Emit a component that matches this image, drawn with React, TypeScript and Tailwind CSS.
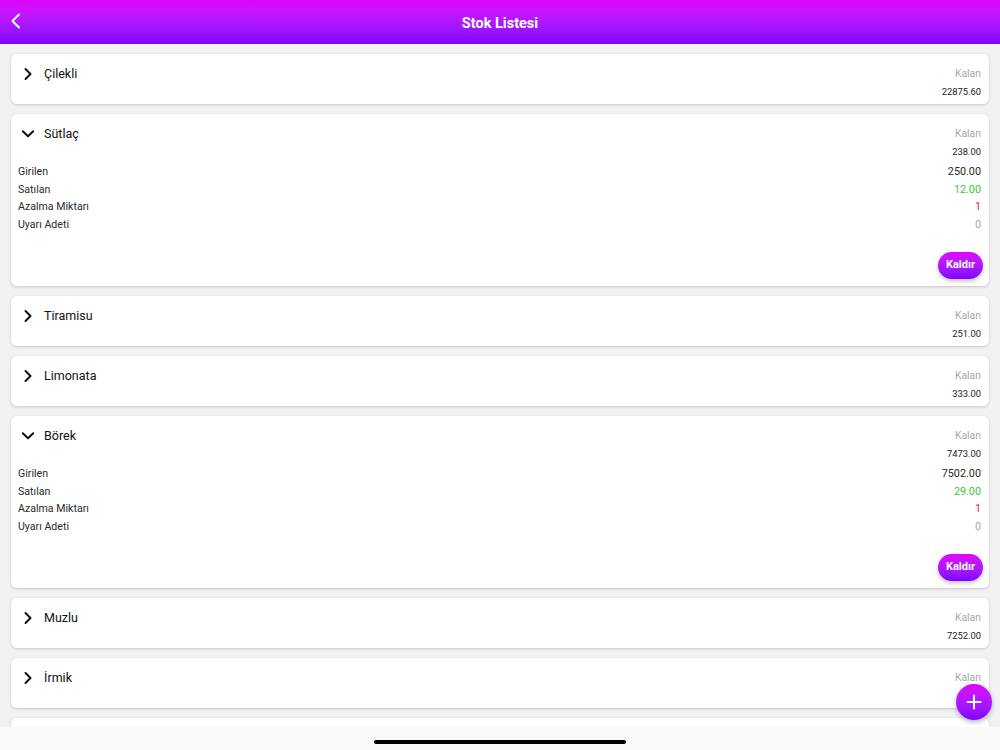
import { useState } from 'react';

// Stok Listesi — accordion list of stock items

interface StockItem {
  id:       number;
  name:     string;
  remain:   string;
  entered?: string;
  sold?:    string;
  drop?:    string;
  warn?:    string;
  open:     boolean;
}

const ITEMS: StockItem[] = [
  { id: 1, name: 'Çilekli',  remain: '22875.60', open: false },
  { id: 2, name: 'Sütlaç',   remain: '238.00', entered: '250.00', sold: '12.00', drop: '1', warn: '0', open: true },
  { id: 3, name: 'Tiramisu', remain: '251.00', open: false },
  { id: 4, name: 'Limonata', remain: '333.00', open: false },
  { id: 5, name: 'Börek',    remain: '7473.00', entered: '7502.00', sold: '29.00', drop: '1', warn: '0', open: true },
  { id: 6, name: 'Muzlu',    remain: '7252.00', open: false },
  { id: 7, name: 'İrmik',    remain: '8.00', open: false },
  { id: 8, name: 'Kakaolu',  remain: '84.00', open: false },
];

function Chevron({ open }: { open: boolean }) {
  return open ? (
    <svg width="14" height="14" viewBox="0 0 14 14" className="shrink-0">
      <path d="M1.8 4.3 L7 9.3 L12.2 4.3" fill="none" stroke="#111" strokeWidth="2" strokeLinecap="round" strokeLinejoin="round" />
    </svg>
  ) : (
    <svg width="14" height="14" viewBox="0 0 14 14" className="shrink-0">
      <path d="M4.5 2 L9.5 7 L4.5 12" fill="none" stroke="#111" strokeWidth="2" strokeLinecap="round" strokeLinejoin="round" />
    </svg>
  );
}

function Row({ label, value, color }: { label: string; value: string; color: string }) {
  return (
    <div className="flex items-center justify-between h-[17.5px]">
      <span className="text-[10.6px] text-[#2a2a2a]">{label}</span>
      <span className={`text-[10.8px] ${color}`}>{value}</span>
    </div>
  );
}

function StockCard({ item }: { item: StockItem }) {
  const [open, setOpen] = useState(item.open);
  return (
    <div className="bg-white rounded-[6px] shadow-[0_1px_3px_rgba(0,0,0,0.18)] px-[7px] pt-[13px] pb-[5px] shrink-0">
      <div className="flex justify-between cursor-pointer" onClick={() => setOpen(!open)}>
        <div className="flex items-center gap-[9px] h-[14px] pl-[3px]">
          <Chevron open={open} />
          <span className="text-[12.5px] text-[#111]">{item.name}</span>
        </div>
        <div className="flex flex-col items-end pr-[1px]">
          <span className="text-[10.4px] leading-[14px] text-[#a8a8a8]">Kalan</span>
          <span className="text-[9.4px] leading-[14px] mt-[4px] text-[#222]">{item.remain}</span>
        </div>
      </div>
      {open && (
        <div className="pr-[1px]">
          <div className="mt-[4.5px]">
            <Row label="Girilen" value={item.entered ?? ''} color="text-[#2a2a2a]" />
            <Row label="Satılan" value={item.sold ?? ''} color="text-[#3cc43c]" />
            <Row label="Azalma Miktarı" value={item.drop ?? ''} color="text-[#e0263a]" />
            <Row label="Uyarı Adeti" value={item.warn ?? ''} color="text-[#a8a8a8]" />
          </div>
          <div className="flex justify-end mt-[18.5px] mb-[2px] -mr-[2px]">
            <button className="h-[27px] px-[8px] rounded-full bg-gradient-to-b from-[#e100ff] to-[#7f00ff] text-white text-[11px] font-bold shadow-[0_2px_4px_rgba(0,0,0,0.25)]">
              Kaldır
            </button>
          </div>
        </div>
      )}
    </div>
  );
}

export default function App() {
  return (
    <div className="w-[1000px] h-[750px] flex flex-col bg-[#f2f2f2] overflow-hidden relative" style={{ fontFamily: 'Roboto, "Noto Sans", sans-serif' }}>
      {/* Header */}
      <div className="h-[44px] shrink-0 flex items-center pt-[3px] relative bg-gradient-to-b from-[#e100ff] to-[#7f00ff]">
        <div className="absolute left-[10px] top-[13px]">
          <svg width="12" height="16" viewBox="0 0 12 16">
            <path d="M9 1.5 L2.5 8 L9 14.5" fill="none" stroke="#fff" strokeWidth="2" strokeLinecap="round" strokeLinejoin="round" />
          </svg>
        </div>
        <div className="flex-1 text-center text-white text-[14.5px] font-bold">Stok Listesi</div>
      </div>

      {/* List */}
      <div className="flex-1 overflow-hidden px-[11px] pt-[10px] flex flex-col gap-[10px]">
        {ITEMS.map(it => <StockCard key={it.id} item={it} />)}
      </div>

      {/* Home indicator bar */}
      <div className="h-[23px] shrink-0 bg-[#f9f9f9] flex items-end justify-center pb-[6px]">
        <div className="w-[252px] h-[4px] rounded-full bg-black" />
      </div>

      {/* FAB */}
      <button className="absolute left-[956px] top-[684px] w-[36px] h-[36px] rounded-full bg-gradient-to-b from-[#e100ff] to-[#7f00ff] shadow-[0_2px_5px_rgba(0,0,0,0.3)] flex items-center justify-center">
        <svg width="16" height="16" viewBox="0 0 16 16">
          <path d="M8 1.5 V14.5 M1.5 8 H14.5" stroke="#fff" strokeWidth="2" strokeLinecap="round" />
        </svg>
      </button>
    </div>
  );
}
